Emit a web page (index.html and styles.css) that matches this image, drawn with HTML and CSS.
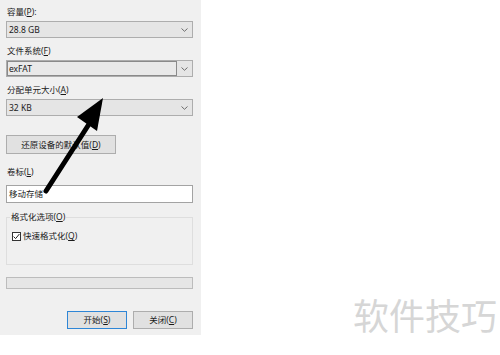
FILE: index.html
```html
<!DOCTYPE html>
<html lang="zh-CN">
<head>
    <meta charset="UTF-8">
    <title>格式化</title>
    <link rel="stylesheet" href="styles.css">
</head>
<body>

    <div class="page">
        <div class="dialog">
            <div class="label">容量(<u>P</u>):</div>
            <div class="combo">
                <span class="combo-text">28.8 GB</span>
                <svg class="chevron" width="7" height="4" viewBox="0 0 7 4"><polyline points="0.5,0.5 3.5,3.3 6.5,0.5"/></svg>
            </div>

            <div class="label">文件系统(<u>F</u>)</div>
            <div class="combo">
                <span class="combo-edit">exFAT</span>
                <svg class="chevron" width="7" height="4" viewBox="0 0 7 4"><polyline points="0.5,0.5 3.5,3.3 6.5,0.5"/></svg>
            </div>

            <div class="label">分配单元大小(<u>A</u>)</div>
            <div class="combo">
                <span class="combo-text">32 KB</span>
                <svg class="chevron" width="7" height="4" viewBox="0 0 7 4"><polyline points="0.5,0.5 3.5,3.3 6.5,0.5"/></svg>
            </div>

            <button class="btn btn-restore">还原设备的默认值(<u>D</u>)</button>

            <div class="label label-volume">卷标(<u>L</u>)</div>
            <div class="textbox">移动存储</div>

            <fieldset class="group">
                <legend>格式化选项(<u>O</u>)</legend>
                <div class="check-row">
                    <span class="checkbox">
                        <svg width="7" height="7" viewBox="0 0 7 7"><polyline points="0.6,3.6 2.6,5.6 6.4,1"/></svg>
                    </span>
                    <span>快速格式化(<u>Q</u>)</span>
                </div>
            </fieldset>

            <div class="progress"></div>

            <div class="actions">
                <button class="btn btn-default">开始(<u>S</u>)</button>
                <button class="btn">关闭(<u>C</u>)</button>
            </div>
        </div>

        <!-- annotation arrow drawn over the dialog -->
        <svg class="arrow" width="500" height="355" viewBox="0 0 500 355">
            <line x1="46" y1="191" x2="91" y2="121" stroke="#000" stroke-width="5" stroke-linecap="round"/>
            <polygon points="103,98 77,117 97,131" fill="#000"/>
        </svg>

        <div class="watermark">软件技巧</div>
    </div>

</body>
</html>
```

FILE: styles.css
```css
body {
    margin: 0;
    padding: 0;
    background: #ffffff;
    font-family: "Noto Sans", "Noto Sans CJK SC", sans-serif;
    font-size: 8.5px;
    color: #1a1a1a;
}

.page {
    position: relative;
    width: 500px;
    height: 355px;
    overflow: hidden;
}

.dialog {
    width: 201px;
    height: 335px;
    box-sizing: border-box;
    padding: 6px 8px 0 6px;
    background: #f0f0f0;
    display: flex;
    flex-direction: column;
}

u {
    text-decoration: underline;
    text-underline-offset: 1px;
}

.label {
    height: 12px;
    line-height: 12px;
    margin-bottom: 3px;
    padding-left: 1px;
}

/* Combo boxes */
.combo {
    height: 17px;
    box-sizing: border-box;
    border: 1px solid #adadad;
    background: #e5e5e5;
    display: flex;
    align-items: center;
    justify-content: space-between;
    padding: 0 4px 0 1px;
    margin-bottom: 7px;
}

.combo-text {
    line-height: 15px;
    padding-left: 1px;
}

.combo-edit {
    width: 170px;
    height: 15px;
    box-sizing: border-box;
    line-height: 13px;
    border: 1px solid #8a8a8a;
    background: #e9e9e9;
    padding-left: 1px;
    margin-left: -1px;
}

.chevron {
    fill: none;
    stroke: #6d6d6d;
    stroke-width: 1;
}

/* Buttons */
.btn {
    font: inherit;
    color: inherit;
    height: 19px;
    box-sizing: border-box;
    border: 1px solid #adadad;
    background: #e1e1e1;
    padding: 0;
    line-height: 17px;
}

.btn-restore {
    width: 110px;
    margin-top: 12px;
}

.btn-default {
    border-color: #2f86d6;
}

.label-volume {
    margin-top: 12px;
    margin-bottom: 7px;
}

.textbox {
    height: 18px;
    box-sizing: border-box;
    border: 1px solid #a3a3a3;
    background: #ffffff;
    line-height: 16px;
    padding-left: 2px;
}

/* Format options group */
.group {
    margin: 8px 0 0 0;
    padding: 0 0 0 3px;
    border: 1px solid #dedede;
    height: 54px;
    box-sizing: border-box;
}

.group legend {
    padding: 0 1px;
    line-height: 12px;
}

.check-row {
    display: flex;
    align-items: center;
    gap: 2px;
    margin: 7px 0 0 2px;
    line-height: 12px;
}

.checkbox {
    width: 9px;
    height: 9px;
    box-sizing: border-box;
    border: 1px solid #333333;
    background: #ffffff;
    display: flex;
    align-items: center;
    justify-content: center;
}

.checkbox svg {
    fill: none;
    stroke: #222222;
    stroke-width: 1;
}

.progress {
    height: 12px;
    box-sizing: border-box;
    margin-top: 12px;
    border: 1px solid #bcbcbc;
    background: #e6e6e6;
}

.actions {
    display: flex;
    justify-content: flex-end;
    gap: 6px;
    margin-top: 22px;
}

.actions .btn {
    width: 60px;
    height: 18px;
    line-height: 16px;
}

.arrow {
    position: absolute;
    left: 0;
    top: 0;
}

.watermark {
    position: absolute;
    left: 353px;
    top: 296px;
    font-family: "Noto Sans CJK SC", sans-serif;
    font-size: 36px;
    line-height: 1;
    color: #d6d6d6;
}
```
